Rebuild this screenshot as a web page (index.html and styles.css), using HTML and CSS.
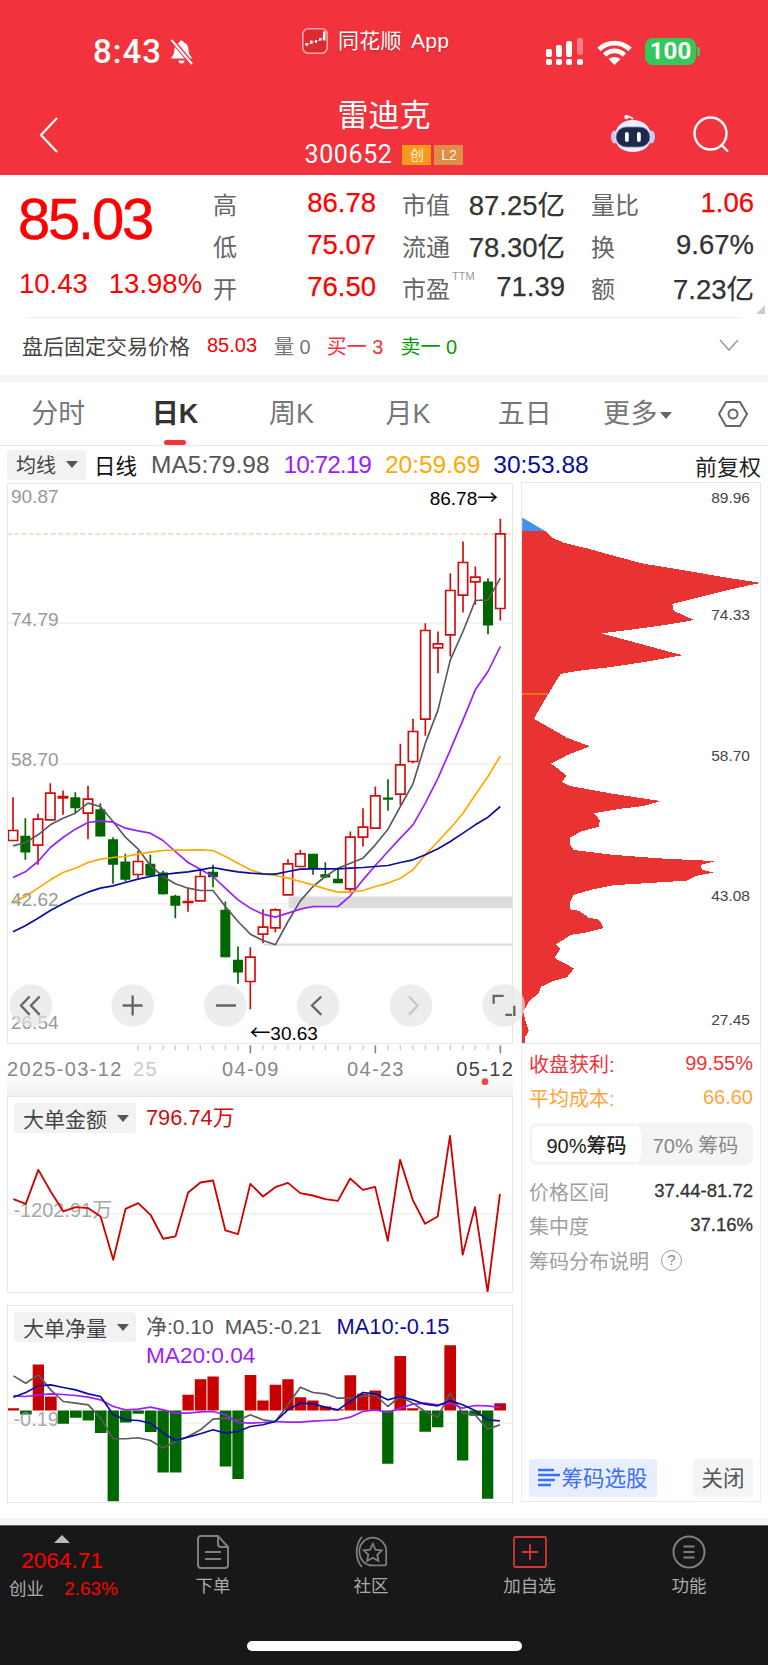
FILE: index.html
```html
<!DOCTYPE html>
<html lang="zh">
<head>
<meta charset="utf-8">
<title>雷迪克</title>
<link rel="stylesheet" href="styles.css">
</head>
<body>
<div class="page">
  <header class="top">
    <div class="status">
      <div class="status-left">
        <span class="time">8:43</span>
        <svg class="bell" viewBox="0 0 25 26"><path d="M12.5 1.5c1.3 0 2 .9 2.1 2 3.4 1 5 3.800 5 7.500 0 3.500 1.200 5.200 3 7.200v1.300H2.400v-1.300c1.800-2 3-3.700 3-7.200 0-3.700 1.600-6.500 5-7.500.1-1.100.8-2 2.100-2z" fill="#fff"/><path d="M9.500 21.500h6a3 3 0 0 1-6 0z" fill="#fff"/><path d="M3 1l20 24" stroke="#f2323c" stroke-width="4.500"/><path d="M2.500 1l20.500 24" stroke="#fff" stroke-width="2"/></svg>
      </div>
      <div class="status-app">
        <svg class="applogo" viewBox="0 0 26 26"><rect x=".8" y=".8" width="24.400" height="24.400" rx="5.500" fill="#df2a31" stroke="#f7a9ad" stroke-width="1.600"/><path d="M4 18l6-4 5-1 5-2 3-4" fill="none" stroke="#f58a8f" stroke-width="1"/><path d="M3.500 15h2.500v2.500H3.500zM8 12.500h2.500V16H8zM13 12h2v3h-2zM17 10h2.500v2.500H17z" fill="#fff"/><rect x="21" y="3.500" width="2.500" height="9" fill="#fff"/></svg>
        <span class="appname">同花顺 App</span>
      </div>
      <div class="status-right">
        <svg class="signal" viewBox="0 0 38 27"><g fill="#fff"><rect x="0" y="11" width="6" height="8" rx="2"/><rect x="10" y="7" width="6" height="12" rx="2"/><rect x="20" y="3" width="6" height="16" rx="2"/><rect x="31" y="0" width="6" height="17" rx="2" fill="#f77d84"/><rect x="0" y="21" width="6" height="6" rx="2"/><rect x="10" y="21" width="6" height="6" rx="2"/><rect x="20" y="21" width="6" height="6" rx="2"/><rect x="31" y="21" width="6" height="6" rx="2"/></g></svg>
        <svg class="wifi" viewBox="0 0 35 26"><path d="M2 10.500C10.500 2 24.500 2 33 10.500M7.500 16c6-5.500 14-5.500 20 0" fill="none" stroke="#fff" stroke-width="4.800"/><path d="M11.500 20c3.500-2.800 8.500-2.800 12 0l-6 6z" fill="#fff"/></svg>
        <div class="battery"><span class="battery-body">100</span><span class="battery-nub"></span></div>
      </div>
    </div>
    <div class="nav">
      <svg class="back" viewBox="0 0 20 36"><path d="M18 1L2 18l16 17" fill="none" stroke="#fff" stroke-width="2.200"/></svg>
      <div class="nav-title">
        <div class="stock-name">雷迪克</div>
        <div class="stock-code"><span>300652</span><b class="tag tag-chuang">创</b><b class="tag tag-l2">L2</b></div>
      </div>
      <div class="nav-actions">
        <svg class="robot" viewBox="0 0 44 38"><path d="M16 3c2-1 4 0 6 2" fill="none" stroke="#e9ecfb" stroke-width="1.800"/><circle cx="15.500" cy="3" r="2.200" fill="#f2f3fd"/><ellipse cx="3.500" cy="23" rx="3.500" ry="6.500" fill="#c4caf2"/><ellipse cx="40.500" cy="23" rx="3.500" ry="6.500" fill="#c4caf2"/><path d="M22 6c11 0 18 7 18 16.500C40 33 32 38 22 38S4 33 4 22.500C4 13 11 6 22 6z" fill="#eef0fb"/><rect x="5" y="13" width="34" height="20" rx="10" fill="#1e2a4a" stroke="#8b78d8" stroke-width=".8"/><rect x="14" y="18" width="3.800" height="10" rx="1.900" fill="#fff"/><rect x="26" y="18" width="3.800" height="10" rx="1.900" fill="#fff"/></svg>
        <svg class="search" viewBox="0 0 36 38"><circle cx="17.500" cy="17.500" r="16" fill="none" stroke="#fff" stroke-width="2.400"/><path d="M29 29.500l6 6" stroke="#fff" stroke-width="2.400"/></svg>
      </div>
    </div>
  </header>

  <section class="quote">
    <div class="price">
      <div class="price-now">85.03</div>
      <div class="price-change"><span>10.43</span><span>13.98%</span></div>
    </div>
    <div class="stats">
      <div class="stat"><span class="stat-k">高</span><span class="stat-v up">86.78</span></div>
      <div class="stat"><span class="stat-k">市值</span><span class="stat-v">87.25亿</span></div>
      <div class="stat"><span class="stat-k">量比</span><span class="stat-v up">1.06</span></div>
      <div class="stat"><span class="stat-k">低</span><span class="stat-v up">75.07</span></div>
      <div class="stat"><span class="stat-k">流通</span><span class="stat-v">78.30亿</span></div>
      <div class="stat"><span class="stat-k">换</span><span class="stat-v">9.67%</span></div>
      <div class="stat"><span class="stat-k">开</span><span class="stat-v up">76.50</span></div>
      <div class="stat"><span class="stat-k stat-ttm">市盈<sup>TTM</sup></span><span class="stat-v">71.39</span></div>
      <div class="stat"><span class="stat-k">额</span><span class="stat-v">7.23亿</span></div>
    </div>
    <span class="corner"></span>
  </section>

  <section class="after-hours">
    <span class="ah-title">盘后固定交易价格</span>
    <span class="ah-price">85.03</span>
    <span class="ah-vol">量 0</span>
    <span class="ah-buy">买一 3</span>
    <span class="ah-sell">卖一 0</span>
    <svg class="ah-more" viewBox="0 0 20 12"><path d="M1 1l9 10 9-10" fill="none" stroke="#999" stroke-width="1.500"/></svg>
  </section>

  <nav class="tabs">
    <span class="tab">分时</span>
    <span class="tab tab-on">日K</span>
    <span class="tab">周K</span>
    <span class="tab">月K</span>
    <span class="tab">五日</span>
    <span class="tab tab-more">更多<i class="caret caret-sm"></i></span>
    <svg class="hexset" viewBox="0 0 30 28"><path d="M8 2h14l7 12-7 12H8L1 14z" fill="none" stroke="#666" stroke-width="2"/><circle cx="15" cy="14" r="4.500" fill="none" stroke="#666" stroke-width="2"/></svg>
  </nav>

  <div class="toolbar">
    <span class="chip-select chip-ma">均线<i class="caret"></i></span>
    <span class="tb-day">日线</span>
    <span class="ma ma5">MA5:79.98</span>
    <span class="ma ma10">10:72.19</span>
    <span class="ma ma20">20:59.69</span>
    <span class="ma ma30">30:53.88</span>
    <span class="tb-adjust">前复权</span>
  </div>

  <main class="charts">
    <div class="charts-left">
      <div class="kline-panel">
        <svg class="kline" viewBox="20 -650 1518 1682">
          <g class="grid-lines">
            <path d="M20 -230H1538M20 192H1538M20 612H1538"/>
          </g>
          <path class="dash-line" d="M20 -498H1538"/>
          <path class="band" d="M865 590H1538V625H865ZM790 731H1538V738H790Z"/>
          <path class="wick-up" d="M38 292V422M113 342V495M150 250V360M188 272V345M263 258V418M413 453V535M563 565V636M600 510V603M750 742V928M788 628V730M825 625V697M863 478V585M900 450V500M1050 395V580M1088 325V440M1125 260V385M1200 132V315M1238 57V190M1275 -230V108M1313 -205V-80M1350 -380V-130M1388 -475V-262M1425 -400V-285M1500 -543V-238"/>
          <path class="wick-down" d="M75 355V480M225 277V340M300 310V410M338 412V552M375 462V545M450 465V530M488 513V585M525 585V655M638 495V562M675 605V772M713 740V852M938 462V525M975 487V535M1013 505V550M1163 238V333M1463 -365V-197"/>
          <path class="body-up" d="M24 392H52V422H24ZM99 358H127V436H99ZM136 280H164V360H136ZM174 290H202V294H174ZM249 298H277V340H249ZM399 485H427V524H399ZM549 605H577V608H549ZM586 530H614V603H586ZM736 772H764V845H736ZM774 682H802V703H774ZM811 630H839V684H811ZM849 492H877V585H849ZM886 462H914V500H886ZM1036 412H1064V567H1036ZM1074 382H1102V412H1074ZM1111 288H1139V385H1111ZM1186 195H1214V283H1186ZM1224 95H1252V185H1224ZM1261 -208H1289V58H1261ZM1299 -168H1327V-156H1299ZM1336 -328H1364V-195H1336ZM1374 -412H1402V-314H1374ZM1411 -368H1439V-354H1411ZM1486 -498H1514V-274H1486Z"/>
          <path class="body-down" d="M60 408H90V458H60ZM210 292H240V325H210ZM285 328H315V410H285ZM323 418H353V495H323ZM360 485H390V540H360ZM435 492H465V528H435ZM473 518H503V583H473ZM510 588H540V618H510ZM623 516H653V532H623ZM660 630H690V772H660ZM698 780H728V818H698ZM923 462H953V505H923ZM960 523H990V533H960ZM998 537H1028V550H998ZM1148 293H1178V300H1148ZM1448 -355H1478V-223H1448Z"/>
          <polyline class="line line-ma5" points="38,438 75,428 113,405 150,375 188,355 225,340 263,310 300,320 338,365 375,412 413,447 450,497 488,530 525,552 563,565 600,572 638,572 675,620 713,665 750,703 788,722 825,735 863,665 900,603 938,560 975,530 1013,505 1050,490 1088,475 1125,435 1163,388 1200,320 1238,252 1275,130 1313,30 1350,-120 1388,-205 1425,-298 1463,-300 1500,-365"/>
          <polyline class="line line-ma10" points="38,533 75,516 113,485 150,443 188,413 225,388 263,368 300,363 338,367 375,385 413,393 450,400 488,422 525,455 563,488 600,508 638,530 675,565 713,600 750,625 788,643 825,652 863,640 900,628 938,620 975,620 1013,620 1050,588 1088,540 1125,497 1163,455 1200,415 1238,375 1275,310 1313,235 1350,150 1388,60 1425,-30 1463,-85 1500,-160"/>
          <polyline class="line line-ma20" points="38,608 75,590 113,565 150,540 188,518 225,505 263,488 300,478 338,473 375,470 413,463 450,457 488,452 525,451 563,451 600,450 638,452 675,470 713,490 750,510 788,522 825,527 863,535 900,545 938,555 975,567 1013,577 1050,577 1088,572 1125,560 1163,550 1200,535 1238,510 1275,465 1313,425 1350,385 1388,340 1425,285 1463,230 1500,168"/>
          <polyline class="line line-ma30" points="38,696 75,678 113,655 150,632 188,612 225,593 263,577 300,565 338,558 375,548 413,538 450,530 488,524 525,520 563,516 600,510 638,503 675,510 713,516 750,520 788,522 825,523 863,515 900,508 938,507 975,507 1013,507 1050,505 1088,503 1125,500 1163,497 1200,488 1238,480 1275,465 1313,447 1350,425 1388,400 1425,375 1463,352 1500,320"/>
          <g class="axis-text">
            <text x="32" y="-590">90.87</text>
            <text x="32" y="-222">74.79</text>
            <text x="32" y="200">58.70</text>
            <text x="32" y="620">42.62</text>
            <text x="32" y="988">26.54</text>
          </g>
          <text class="mark-text" x="1288" y="-585">86.78<tspan class="mark-arrow">→</tspan></text>
          <text class="mark-text" x="748" y="1022"><tspan class="mark-arrow">←</tspan>30.63</text>
          <g class="ctrl">
            <circle cx="92" cy="917" r="64"/><circle cx="397" cy="917" r="64"/><circle cx="675" cy="917" r="64"/><circle cx="953" cy="917" r="64"/><circle cx="1232" cy="917" r="64"/><circle cx="1510" cy="917" r="64"/>
          </g>
          <path class="ctrl-icon" d="M88 890L62 917L88 945M118 890L92 917L118 945M367 917H427M397 887V947M647 917H707M963 890L935 917L963 945M1480 912V888H1510M1542 918V945H1515"/>
          <path class="ctrl-off" d="M1226 890L1252 917L1226 945"/>
        </svg>
      </div>
      <div class="xaxis">
        <svg viewBox="20 1032 1518 156">
          <path class="tick-sm" d="M413 1036V1050M450 1036V1050M488 1036V1050M525 1036V1050M563 1036V1050M600 1036V1050M638 1036V1050M675 1036V1050M713 1036V1050M788 1036V1050M825 1036V1050M863 1036V1050M900 1036V1050M938 1036V1050M975 1036V1050M1013 1036V1050M1050 1036V1050M1088 1036V1050M1163 1036V1050M1200 1036V1050M1238 1036V1050M1275 1036V1050M1313 1036V1050M1350 1036V1050M1388 1036V1050M1425 1036V1050M1463 1036V1050"/>
          <path class="tick-lg" d="M750 1036V1060M1125 1036V1060M1500 1036V1060"/>
          <g class="date-text">
            <text x="20" y="1129">2025-03-12</text>
            <text class="date-fade" x="398" y="1129">25</text>
            <text x="665" y="1129">04-09</text>
            <text x="1040" y="1129">04-23</text>
            <text class="date-last" x="1368" y="1129">05-12</text>
          </g>
          <circle class="date-dot" cx="1454" cy="1145" r="10"/>
        </svg>
      </div>
      <div class="sub-panel">
        <svg class="sub-chart" viewBox="20 18 1518 592">
          <path class="grid-line" d="M20 372H1538"/>
          <text class="sub-axis" x="38" y="381">-1202.91万</text>
          <polyline class="line line-amount" points="38,328 75,342 113,240 150,305 188,365 225,352 263,355 300,380 338,510 375,357 413,340 450,375 488,447 525,440 563,308 600,278 638,272 675,422 713,433 750,282 788,320 825,292 863,279 900,310 938,317 975,328 1013,333 1050,266 1088,300 1125,291 1163,453 1200,210 1238,330 1275,402 1313,380 1350,138 1388,495 1425,352 1463,606 1500,312"/>
        </svg>
        <div class="sub-head">
          <span class="chip-select">大单金额<i class="caret"></i></span>
          <span class="amount-val">796.74万</span>
        </div>
      </div>
      <div class="sub-panel sub-panel-second">
        <svg class="sub-chart" viewBox="20 645 1518 595">
          <path class="grid-line" d="M20 1000H1538"/>
          <path class="bar-up" d="M20 955H55V962H20ZM96 824H130V962H96ZM133 920H168V962H133ZM546 915H580V962H546ZM583 868H618V962H583ZM621 860H655V962H621ZM733 855H768V962H733ZM771 932H805V962H771ZM808 885H843V962H808ZM846 868H880V962H846ZM883 922H918V962H883ZM921 932H955V962H921ZM958 950H993V962H958ZM996 958H1030V962H996ZM1033 856H1068V962H1033ZM1071 912H1105V962H1071ZM1108 902H1143V962H1108ZM1183 798H1218V962H1183ZM1221 955H1255V962H1221ZM1333 766H1368V962H1333ZM1483 940H1518V962H1483Z"/>
          <path class="bar-down" d="M58 962H93V974H58ZM171 962H205V1002H171ZM208 962H243V984H208ZM246 962H280V992H246ZM283 962H318V1030H283ZM321 962H355V1235H321ZM358 962H393V998H358ZM396 962H430V972H396ZM433 962H468V1027H433ZM471 962H505V1148H471ZM508 962H543V1148H508ZM658 962H693V1130H658ZM696 962H730V1168H696ZM1146 962H1180V1122H1146ZM1258 962H1293V1026H1258ZM1296 962H1330V1012H1296ZM1371 962H1405V1112H1371ZM1408 962H1443V978H1408ZM1446 962H1480V1227H1446Z"/>
          <text class="sub-axis" x="38" y="1008">-0.19</text>
          <polyline class="line-thin line-ma5" points="38,858 75,880 113,855 150,900 188,935 225,940 263,945 300,985 338,1047 375,1047 413,1044 450,1052 488,1075 525,1055 563,1040 600,1020 638,988 675,985 713,992 750,975 788,990 825,995 863,945 900,892 938,908 975,912 1013,925 1050,925 1088,920 1125,915 1163,950 1200,920 1238,940 1275,965 1313,982 1350,910 1388,970 1425,975 1463,1018 1500,1005"/>
          <polyline class="line-thin line-ma10" points="38,918 75,920 113,915 150,912 188,914 225,917 263,922 300,930 338,950 375,960 413,958 450,952 488,960 525,970 563,970 600,966 638,965 675,975 713,998 750,1000 788,998 825,995 863,997 900,997 938,994 975,992 1013,990 1050,982 1088,965 1125,960 1163,968 1200,955 1238,943 1275,940 1313,945 1350,940 1388,955 1425,947 1463,948 1500,953"/>
          <polyline class="line-thin line-ma30" points="38,922 75,908 113,888 150,885 188,893 225,900 263,912 300,920 338,975 375,990 413,992 450,1000 488,1030 525,1052 563,1042 600,1032 638,1020 675,1030 713,1025 750,1010 788,1005 825,995 863,960 900,940 938,942 975,952 1013,960 1050,935 1088,908 1125,912 1163,930 1200,920 1238,930 1275,943 1313,948 1350,932 1388,945 1425,962 1463,990 1500,993"/>
        </svg>
        <div class="sub-head sub-head-wrap">
          <span class="chip-select">大单净量<i class="caret"></i></span>
          <div class="net-vals">
            <span class="nv-gray">净:0.10</span><span class="nv-gray">MA5:-0.21</span><span class="nv-blue">MA10:-0.15</span><span class="nv-purple">MA20:0.04</span>
          </div>
        </div>
      </div>
    </div>

    <div class="charts-right">
      <div class="chips-panel">
        <svg class="chips" viewBox="0 0 240 562">
          <g transform="translate(-10.500 -12) scale(.33333 .3827)">
            <polygon class="chip-blue" points="35,124 105,160 35,160"/>
            <polygon class="chip-red" points="35,160 105,160 128,178 160,190 240,207 300,222 400,245 520,262 640,280 750,295 680,308 600,325 530,340 485,350 490,368 550,392 480,403 380,415 272,427 380,452 515,484 400,502 300,515 200,525 150,533 110,590 70,650 120,675 170,700 238,722 170,745 122,767 168,798 155,815 180,826 300,845 450,865 400,878 330,885 250,897 268,915 265,932 210,945 180,960 178,978 190,993 300,1005 450,1015 615,1022 570,1032 575,1045 610,1052 560,1060 530,1073 400,1080 310,1085 250,1095 190,1110 178,1130 180,1148 205,1152 235,1170 265,1175 280,1197 230,1208 180,1215 150,1232 135,1240 150,1250 132,1275 165,1290 190,1303 170,1325 130,1335 92,1350 85,1365 55,1390 38,1415 45,1440 55,1465 45,1480 45,1500 35,1500"/>
            <path class="chip-cost" d="M35 585H113"/>
          </g>
          <g class="chip-axis">
            <text x="229" y="20.500">89.96</text>
            <text x="229" y="137.500">74.33</text>
            <text x="229" y="278.500">58.70</text>
            <text x="229" y="418.500">43.08</text>
            <text x="229" y="543">27.45</text>
          </g>
        </svg>
      </div>
      <div class="info-panel">
        <div class="info-row info-profit"><span>收盘获利:</span><span>99.55%</span></div>
        <div class="info-row info-cost"><span>平均成本:</span><span>66.60</span></div>
        <div class="segment">
          <span class="seg seg-on">90%筹码</span>
          <span class="seg">70% 筹码</span>
        </div>
        <div class="info-row info-stat"><span>价格区间</span><b>37.44-81.72</b></div>
        <div class="info-row info-stat"><span>集中度</span><b>37.16%</b></div>
        <div class="info-row info-help"><span>筹码分布说明</span><i class="help">?</i></div>
        <div class="info-actions">
          <span class="btn btn-pick"><svg viewBox="0 0 22 20"><path d="M0 2h16M0 7h22M0 12h17M0 17h13" stroke="#3d6ff2" stroke-width="2.600"/></svg>筹码选股</span>
          <span class="btn btn-close">关闭</span>
        </div>
      </div>
    </div>
  </main>

  <div class="stripe"></div>

  <footer class="bottom">
    <div class="bottom-row">
      <div class="index">
        <i class="index-arrow"></i>
        <div class="index-val">2064.71</div>
        <div class="index-sub"><span>创业</span><b>2.63%</b></div>
      </div>
      <div class="bar-item">
        <svg viewBox="0 0 32 34"><path d="M4 1h17l10 11v18a3 3 0 0 1-3 3H4a3 3 0 0 1-3-3V4a3 3 0 0 1 3-3z" fill="none" stroke="#7e7e7e" stroke-width="2"/><path d="M21 1v8a3 3 0 0 0 3 3h7M8 17h16M8 24h16" fill="none" stroke="#7e7e7e" stroke-width="2"/></svg>
        <span>下单</span>
      </div>
      <div class="bar-item">
        <svg viewBox="0 0 38 36"><path d="M9 1C1 10 1 26 9 35" fill="none" stroke="#7e7e7e" stroke-width="2"/><path d="M21 2c8 0 15 7 15 15v14a2 2 0 0 1-2 2H21C12 33 6 26 6 17 6 9 13 2 21 2z" fill="none" stroke="#7e7e7e" stroke-width="2"/><path d="M21 9l3 6.500 7 .8-5 4.800 1.300 7L21 24.500 14.700 28l1.300-7-5-4.800 7-.8z" fill="none" stroke="#7e7e7e" stroke-width="2"/></svg>
        <span>社区</span>
      </div>
      <div class="bar-item">
        <svg viewBox="0 0 34 32"><rect x="1" y="1" width="32" height="30" rx="1.500" fill="none" stroke="#d9333b" stroke-width="1.800"/><path d="M17 8v16M9 16h16" stroke="#d9333b" stroke-width="1.800"/></svg>
        <span>加自选</span>
      </div>
      <div class="bar-item">
        <svg viewBox="0 0 34 34"><circle cx="17" cy="17" r="15.500" fill="none" stroke="#7e7e7e" stroke-width="2"/><path d="M11.500 11.500h11M11.500 17h11M11.500 22.500h11" stroke="#7e7e7e" stroke-width="2"/></svg>
        <span>功能</span>
      </div>
    </div>
    <div class="home"></div>
  </footer>
</div>
</body>
</html>
```
FILE: styles.css
```css
* { box-sizing: border-box; }
html, body { margin: 0; padding: 0; background: #fff; }
body { font-family: "Liberation Sans", "Noto Sans CJK SC", sans-serif; color: #333; }
.page { width: 768px; height: 1665px; overflow: hidden; display: flex; flex-direction: column; }
svg { display: block; }
i { font-style: normal; }

/* header */
.top { height: 175px; flex: none; background: #f2323c; color: #fff; display: flex; flex-direction: column; }
.status { height: 84px; display: flex; align-items: flex-start; }
.status-left { width: 302px; padding: 35px 0 0 93px; display: flex; align-items: flex-start; gap: 7px; }
.time { font-family: Roboto, sans-serif; font-weight: 500; font-size: 33px; line-height: 34px; letter-spacing: 1px; }
.bell { width: 25px; height: 26px; margin-top: 4px; }
.status-app { width: 244px; padding-top: 27px; display: flex; align-items: center; gap: 10px; }
.applogo { width: 26px; height: 26px; }
.appname { font-size: 21px; line-height: 28px; word-spacing: 3px; letter-spacing: .3px; text-shadow: 0 1px 2px rgba(0,0,0,.25); }
.status-right { padding-top: 38px; display: flex; align-items: flex-start; }
.signal { width: 38px; height: 27px; }
.wifi { width: 35px; height: 26px; margin: 1px 0 0 13px; }
.battery { display: flex; align-items: center; margin-left: 13px; }
.battery-body { width: 51px; height: 27px; border-radius: 8px; background: #34c759; font-family: Roboto, sans-serif; font-weight: 700; font-size: 24px; line-height: 27px; text-align: center; }
.battery-nub { width: 3px; height: 9px; margin-left: 1px; border-radius: 0 2px 2px 0; background: #34c759; }
.nav { height: 91px; display: grid; grid-template-columns: 1fr auto 1fr; }
.back { width: 20px; height: 36px; margin: 33px 0 0 39px; }
.nav-title { display: flex; flex-direction: column; align-items: center; }
.stock-name { font-size: 31px; line-height: 40px; margin-top: 12px; }
.stock-code { display: flex; align-items: center; font-family: Roboto, sans-serif; font-size: 25px; line-height: 26px; margin-top: 6px; letter-spacing: .6px; }
.tag { width: 29px; height: 20px; margin-left: 3px; font-family: "Liberation Sans", "Noto Sans CJK SC", sans-serif; font-weight: 400; font-size: 14px; line-height: 20px; text-align: center; letter-spacing: 0; color: #fff3d8; }
.tag-chuang { background: #f79a1c; margin-left: 10px; }
.tag-l2 { background: #de8f45; }
.nav-actions { display: flex; justify-content: flex-end; gap: 38px; padding: 30px 39px 0 0; align-items: flex-start; }
.robot { width: 44px; height: 38px; }
.search { width: 36px; height: 38px; margin-top: 2px; }

/* quote */
.quote { position: relative; height: 143px; flex: none; padding: 7px 14px 0 0; display: flex; }
.quote::after { content: ""; position: absolute; left: 28px; right: 28px; bottom: 0; height: 1px; background: #ececec; }
.price { width: 214px; padding-left: 18px; color: #f00; }
.price-now { font-size: 58px; line-height: 58px; margin-top: 8px; letter-spacing: -2.200px; font-weight: 500; -webkit-text-stroke: .5px #f00; }
.price-change { display: flex; gap: 21px; padding-left: 1px; font-size: 27.500px; line-height: 40px; margin-top: 16px; }
.stats { flex: 1; display: grid; grid-template-columns: repeat(3, 163px); column-gap: 26px; grid-auto-rows: 42px; }
.stat { display: flex; justify-content: space-between; align-items: center; }
.stat-k { font-size: 24px; color: #666; }
.stat-v { font-size: 27.500px; color: #333; -webkit-text-stroke: .25px currentColor; }
.stat-v.up { color: #f00; }
.stat-ttm { position: relative; }
.stat-ttm sup { position: absolute; left: 50px; top: 0; font-size: 11px; color: #999; line-height: 12px; }
.corner { position: absolute; right: 3px; bottom: 4px; width: 0; height: 0; border-left: 9px solid transparent; border-bottom: 9px solid #ccc; }

.after-hours { height: 64px; flex: none; display: flex; align-items: center; padding: 0 0 3px 22px; border-bottom: 7px solid #f5f5f5; font-size: 20px; }
.ah-title { font-size: 21px; color: #444; }
.ah-price { margin-left: 17px; color: #f00; }
.ah-vol { margin-left: 17px; color: #777; }
.ah-buy { margin-left: 16px; color: #f4333c; }
.ah-sell { margin-left: 17px; color: #0a9a0a; }
.ah-more { width: 20px; height: 12px; margin-left: auto; margin-right: 29px; }

/* tabs */
.tabs { height: 64px; flex: none; display: grid; grid-template-columns: repeat(6, 116.600px) 1fr; align-items: center; border-bottom: 1px solid #e9e9e9; }
.tab { position: relative; text-align: center; font-size: 27px; line-height: 64px; height: 64px; color: #777; white-space: nowrap; }
.tab-on { color: #333; font-weight: 700; }
.tab-on::after { content: ""; position: absolute; left: 47px; width: 22px; top: 58px; height: 5px; border-radius: 3px; background: #f5333d; }
.tab-more { text-align: left; padding-left: 20px; letter-spacing: .5px; }
.hexset { width: 30px; height: 28px; margin-left: 18px; }
.caret { display: inline-block; flex: none; width: 0; height: 0; margin-left: 10px; vertical-align: middle; border-left: 6px solid transparent; border-right: 6px solid transparent; border-top: 7px solid #555; }
.caret-sm { margin-left: 2px; border-left-width: 6px; border-right-width: 6px; border-top: 7px solid #666; }

/* toolbar */
.toolbar { height: 37px; flex: none; display: flex; align-items: center; padding-left: 7px; white-space: nowrap; }
.chip-select { display: inline-flex; align-items: center; justify-content: space-between; white-space: nowrap; height: 30px; padding: 0 8px 0 9px; background: #f2f2f2; border-radius: 3px; font-size: 20px; color: #444; }
.chip-ma { width: 79px; }
.tb-day { margin-left: 8px; font-size: 21.500px; color: #111; }
.ma { font-size: 24.500px; }
.ma5 { margin-left: 14px; color: #555; }
.ma10 { margin-left: 14px; color: #9a1fff; letter-spacing: -1px; }
.ma20 { margin-left: 14px; color: #ffa800; }
.ma30 { margin-left: 13px; color: #0a0ea0; }
.tb-adjust { margin-left: auto; margin-right: 7px; font-size: 22px; color: #222; }

/* charts */
.charts { flex: none; height: 1020px; display: grid; grid-template-columns: 506px 240px; column-gap: 8px; padding-left: 7px; }
.charts-left { display: flex; flex-direction: column; }
.kline-panel { position: relative; z-index: 2; height: 561px; outline: 1.500px solid #e6e6e6; outline-offset: -1px; }
.kline { width: 506px; height: 561px; overflow: visible; }
.grid-lines, .grid-line { fill: none; stroke: #eee; stroke-width: 4; }
.grid-lines path { fill: none; }
.dash-line { fill: none; stroke: #e8cba6; stroke-width: 3.500; stroke-dasharray: 14 8; }
.band { fill: #dcdcdc; }
.wick-up { fill: none; stroke: #d20c0c; stroke-width: 5; }
.wick-down { fill: none; stroke: #006600; stroke-width: 5; }
.body-up { fill: #fff; stroke: #d20c0c; stroke-width: 5; }
.body-down { fill: #006600; }
.line, .line-thin { fill: none; stroke-linejoin: round; }
.line { stroke-width: 5; }
.line-thin { stroke-width: 5; }
.line-ma5 { stroke: #5a5a5a; }
.line-ma10 { stroke: #9a1fff; }
.line-ma20 { stroke: #ffa800; }
.line-ma30 { stroke: #0a0ea0; }
.line-amount { stroke: #d00000; stroke-width: 5.500; }
.axis-text text { font-size: 57px; fill: #999; }
.mark-text { font-size: 57px; fill: #000; }
.mark-arrow { font-family: "Noto Sans CJK SC", sans-serif; font-size: 62px; }
.ctrl circle { fill: rgba(228,228,228,.68); }
.ctrl-icon { fill: none; stroke: #666; stroke-width: 7; }
.ctrl-off { fill: none; stroke: #c8c8c8; stroke-width: 7; }

.xaxis { height: 52px; background: linear-gradient(#fff 50%, #f0f0f0); }
.xaxis svg { width: 506px; height: 52px; }
.tick-sm { fill: none; stroke: #ccc; stroke-width: 4; }
.tick-lg { fill: none; stroke: #888; stroke-width: 5; }
.date-text text { font-size: 60px; letter-spacing: 4px; fill: #888; }
.date-text .date-fade { fill: #ccc; }
.date-text .date-last { fill: #444; }
.date-dot { fill: #f2454f; }

.sub-panel { display: grid; height: 197px; outline: 1.500px solid #e6e6e6; outline-offset: -1px; }
.sub-panel > * { grid-area: 1 / 1; }
.sub-panel-second { height: 198px; margin-top: 12px; }
.sub-chart { width: 506px; height: 197px; overflow: hidden; }
.sub-panel-second .sub-chart { height: 198px; }
.sub-axis { font-size: 60px; fill: rgba(150,150,150,.85); }
.sub-head { display: flex; align-items: flex-start; padding: 7px 0 0 7px; z-index: 1; height: 40px; }
.amount-val { margin-left: 10px; font-size: 21.800px; line-height: 30px; color: #c81010; }
.sub-head .chip-select { width: 122px; flex: none; font-size: 21px; }
.bar-up { fill: #c80000; }
.bar-down { fill: #006600; }
.sub-head-wrap { height: 70px; }
.net-vals { width: 345px; margin-left: 10px; display: flex; flex-wrap: wrap; column-gap: 11px; font-size: 21px; line-height: 29px; }
.nv-gray { color: #555; }
.nv-blue { color: #0a0ea0; font-size: 21.800px; margin-left: 4px; }
.nv-purple { color: #9a1fff; font-size: 22.600px; width: 100%; }

.charts-right { display: flex; flex-direction: column; }
.chips-panel { height: 562px; margin-top: -1px; outline: 1.500px solid #e8e8e8; outline-offset: -1px; }
.chips { width: 240px; height: 562px; overflow: visible; }
.chip-blue { fill: #4492ee; }
.chip-red { fill: #e93232; shape-rendering: crispEdges; }
.chip-cost { fill: none; stroke: #ff9d00; stroke-width: 3; }
.chip-axis text { font-size: 15.500px; fill: #444; text-anchor: end; }
.info-panel { height: 458px; padding: 0 7px; display: flex; flex-direction: column; border: 1.500px solid #ececec; border-top: 0; }
.info-row { display: flex; justify-content: space-between; align-items: center; font-size: 20px; }
.info-profit { color: #f2323c; margin-top: 2px; height: 34px; }
.info-cost { color: #ffa53c; height: 34px; }
.segment { height: 42px; margin-top: 9px; padding: 3px; border-radius: 8px; background: #f4f4f4; display: grid; grid-template-columns: 109px 1fr; font-size: 20px; color: #888; }
.seg { display: flex; align-items: center; justify-content: center; }
.seg-on { background: #fff; border-radius: 6px; color: #222; font-weight: 500; }
.info-stat { color: #a0a0a0; height: 34px; }
.segment + .info-stat { margin-top: 9px; }
.info-stat b { font-size: 18.500px; color: #333; font-weight: 500; -webkit-text-stroke: .3px #333; }
.info-help { color: #a0a0a0; height: 34px; justify-content: flex-start; gap: 12px; margin-top: 1px; }
.help { width: 21px; height: 21px; border: 1.500px solid #999; border-radius: 50%; font-size: 15px; line-height: 18px; text-align: center; color: #888; }
.info-actions { margin-top: auto; margin-bottom: 4px; display: flex; justify-content: space-between; }
.btn { height: 38px; padding-bottom: 3px; border-radius: 3px; display: flex; align-items: center; justify-content: center; font-size: 21.500px; }
.btn-pick { width: 128px; background: #e6eeff; color: #3d6ff2; gap: 1px; }
.btn-pick svg { width: 22px; height: 20px; margin-top: 3px; }
.btn-close { width: 60px; background: #f4f4f4; color: #555; }

.stripe { height: 22px; flex: none; background: linear-gradient(#fff 15px, #f4f4f4 15px); }

/* bottom */
.bottom { flex: none; height: 140px; background: #181818; border-top: 1px solid #666; color: #aaa; display: flex; flex-direction: column; }
.bottom-row { display: grid; grid-template-columns: 133px 160px 156px 161px 158px; height: 115px; }
.index { position: relative; padding-top: 9px; text-align: center; width: 124px; }
.index-arrow { display: block; width: 0; height: 0; margin: 0 auto; border-left: 8px solid transparent; border-right: 8px solid transparent; border-bottom: 8px solid #bbb; }
.index-val { font-size: 22.500px; line-height: 26px; margin-top: 5px; color: #f00; }
.index-sub { display: flex; justify-content: space-between; padding: 0 6px 0 9px; margin-top: 1px; line-height: 28px; font-size: 17.500px; }
.index-sub b { font-weight: 400; font-size: 19px; color: #f00; }
.bar-item { display: flex; flex-direction: column; align-items: center; padding-top: 9px; font-size: 17.500px; }
.bar-item svg { width: 34px; height: 34px; }
.bar-item span { margin-top: 4px; line-height: 26px; }
.home { width: 275px; height: 10px; margin: 0 auto; border-radius: 5px; background: #fff; }
```
